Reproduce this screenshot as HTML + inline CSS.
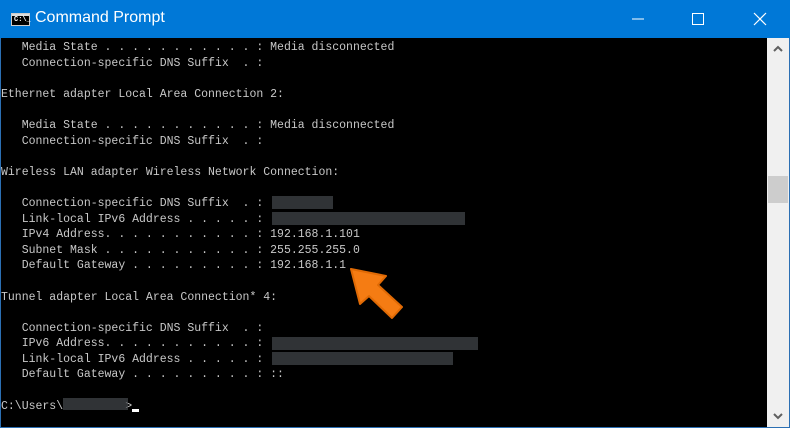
<!DOCTYPE html>
<html><head><style>
html,body{margin:0;padding:0;width:790px;height:428px;overflow:hidden;background:#000}
.title{position:absolute;left:0;top:0;width:790px;height:38px;background:#0078d7}
.tt{position:absolute;left:35px;top:9px;color:#fff;font:16px "Liberation Sans",sans-serif}
.ico{position:absolute;left:11px;top:13px;width:19px;height:13px;background:#000;border:1px solid #ccc;box-sizing:border-box}
.ico:before{content:"";position:absolute;left:0;top:0;right:0;height:2px;background:#ddd}
.ico span{position:absolute;left:2px;top:2px;font:bold 7px "Liberation Mono",monospace;color:#fff}
.border{position:absolute;left:0;top:38px;width:1px;height:390px;background:#2b6fb3}
.border2{position:absolute;left:0;top:427px;width:790px;height:1px;background:#2b6fb3}
.border3{position:absolute;left:789px;top:38px;width:1px;height:390px;background:#2b6fb3}
pre{position:absolute;left:1px;top:40px;margin:0;color:#c8c8c8;font:11.5px/15.6px "Liberation Mono",monospace;white-space:pre}
.sb{position:absolute;left:767px;top:38px;width:22px;height:389px;background:#f0f0f0}
.thumb{position:absolute;left:768px;top:176px;width:20px;height:27px;background:#cdcdcd}
.blur{position:absolute;background:#45484d;opacity:.7}
.cur{position:absolute;left:132px;top:409px;width:7px;height:3px;background:#fff}
</style></head><body>
<div class="title"><div class="ico"><span>C:\_</span></div><div class="tt">Command Prompt</div>
<svg style="position:absolute;left:600px;top:0" width="190" height="38">
<line x1="32" y1="19" x2="44" y2="19" stroke="#fff" stroke-width="1"/>
<rect x="92.5" y="13.5" width="11" height="11" fill="none" stroke="#fff" stroke-width="1"/>
<line x1="154" y1="13" x2="166" y2="25" stroke="#fff" stroke-width="1.2"/>
<line x1="166" y1="13" x2="154" y2="25" stroke="#fff" stroke-width="1.2"/>
</svg></div>
<div class="border"></div><div class="border3"></div>
<pre>   Media State . . . . . . . . . . . : Media disconnected
   Connection-specific DNS Suffix  . :

Ethernet adapter Local Area Connection 2:

   Media State . . . . . . . . . . . : Media disconnected
   Connection-specific DNS Suffix  . :

Wireless LAN adapter Wireless Network Connection:

   Connection-specific DNS Suffix  . :
   Link-local IPv6 Address . . . . . :
   IPv4 Address. . . . . . . . . . . : 192.168.1.101
   Subnet Mask . . . . . . . . . . . : 255.255.255.0
   Default Gateway . . . . . . . . . : 192.168.1.1

Tunnel adapter Local Area Connection* 4:

   Connection-specific DNS Suffix  . :
   IPv6 Address. . . . . . . . . . . :
   Link-local IPv6 Address . . . . . :
   Default Gateway . . . . . . . . . : ::

C:\Users\         &gt;</pre>
<div class="blur" style="left:272px;top:196px;width:61px;height:13px"></div>
<div class="blur" style="left:272px;top:212px;width:193px;height:13px"></div>
<div class="blur" style="left:272px;top:337px;width:206px;height:13px"></div>
<div class="blur" style="left:272px;top:352px;width:181px;height:13px"></div>
<div class="blur" style="left:63px;top:398px;width:65px;height:12px"></div>
<div class="cur"></div>
<svg style="position:absolute;left:0;top:0" width="790" height="428">
<polygon points="351,269 386,276 378,285 402,307 392,318 369,296 360,304" fill="#f57c13" stroke="#e06a05" stroke-width="2" stroke-linejoin="round"/>
</svg>
<div class="sb"></div><div class="thumb"></div>
<svg style="position:absolute;left:767px;top:38px" width="22" height="389">
<polyline points="7,13 11,9 15,13" fill="none" stroke="#606060" stroke-width="2"/>
<polyline points="7,376 11,380 15,376" fill="none" stroke="#606060" stroke-width="2"/>
</svg>
<div class="border2"></div>
</body></html>
